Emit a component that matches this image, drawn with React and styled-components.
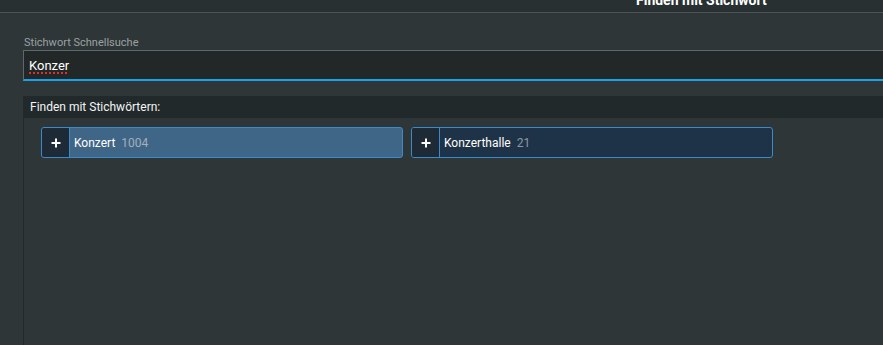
import styled, { createGlobalStyle } from "styled-components"

const GlobalStyle = createGlobalStyle`
  html, body {
    margin: 0;
    padding: 0;
    background: #2f3638;
    font-family: Roboto, "Liberation Sans", sans-serif;
    overflow: hidden;
  }
`

const Page = styled.div`
  display: flex;
  flex-direction: column;
  height: 345px;
  overflow: hidden;
  background: #2f3638;
`

const TopBar = styled.header`
  height: 12px;
  display: flex;
  align-items: flex-end;
  padding-left: 636px;
  background: #283032;
  border-bottom: 1px solid #4c5457;
  overflow: hidden;
`

const Title = styled.h1`
  margin: 0 0 4px;
  font-size: 14px;
  line-height: 16px;
  font-weight: 700;
  color: #ffffff;
  white-space: nowrap;
`

const Main = styled.main`
  flex: 1;
  display: flex;
  flex-direction: column;
  padding-left: 23px;
  min-height: 0;
`

const FieldLabel = styled.label`
  margin-top: 24px;
  padding-left: 1px;
  font-size: 11px;
  line-height: 12px;
  color: #9ba1a3;
`

const SearchBox = styled.div`
  margin-top: 1px;
  width: calc(100% + 20px);
  height: 28px;
  display: flex;
  align-items: center;
  padding-left: 5px;
  background: #222728;
  border-top: 1px solid #5f676a;
  border-left: 1px solid #5f676a;
  border-bottom: 2px solid #17a3e8;
  font-size: 13px;
  color: #ffffff;
`

const Misspelled = styled.span`
  text-decoration: underline dotted #e0302a;
  text-decoration-thickness: 2px;
  text-underline-offset: 3px;
`

const Panel = styled.section`
  flex: 1;
  margin-top: 15px;
  display: flex;
  flex-direction: column;
  border-left: 1px solid #232a2c;
`

const PanelHeader = styled.div`
  height: 22px;
  display: flex;
  align-items: center;
  padding-left: 6px;
  background: #22292b;
  font-size: 12px;
  color: #f2f4f5;
`

const ChipRow = styled.div`
  display: flex;
  gap: 8px;
  padding: 9px 17px;
`

const Chip = styled.div`
  width: 362px;
  height: 31px;
  box-sizing: border-box;
  display: flex;
  border: 1px solid #3a8bcb;
  border-radius: 3px;
  overflow: hidden;
  background: ${(p) => (p.$active ? "#3f6687" : "#1f3348")};
`

const AddButton = styled.button`
  width: 28px;
  padding: 0;
  display: flex;
  align-items: center;
  justify-content: center;
  background: #1f2a37;
  border: none;
  border-right: 1px solid #3a8bcb;
  cursor: pointer;
`

const ChipLabel = styled.span`
  display: flex;
  align-items: center;
  gap: 6px;
  padding-left: 4px;
  font-size: 12px;
  color: #ffffff;
`

const Count = styled.span`
  color: ${(p) => (p.$active ? "#a3afba" : "#8d99a4")};
`

const Plus = () => (
  <svg width="10" height="10" viewBox="0 0 10 10">
    <path d="M5 0.5v9M0.5 5h9" stroke="#fff" strokeWidth="2" />
  </svg>
)

const keywords = [
  { name: "Konzert", count: 1004, active: true },
  { name: "Konzerthalle", count: 21, active: false },
]

export default function App() {
  return (
    <>
      <GlobalStyle />
      <Page>
        <TopBar>
          <Title>Finden mit Stichwort</Title>
        </TopBar>
        <Main>
          <FieldLabel>Stichwort Schnellsuche</FieldLabel>
          <SearchBox>
            <Misspelled>Konzer</Misspelled>
          </SearchBox>
          <Panel>
            <PanelHeader>Finden mit Stichwörtern:</PanelHeader>
            <ChipRow>
              {keywords.map((k) => (
                <Chip key={k.name} $active={k.active}>
                  <AddButton>
                    <Plus />
                  </AddButton>
                  <ChipLabel>
                    {k.name}
                    <Count $active={k.active}>{k.count}</Count>
                  </ChipLabel>
                </Chip>
              ))}
            </ChipRow>
          </Panel>
        </Main>
      </Page>
    </>
  )
}
